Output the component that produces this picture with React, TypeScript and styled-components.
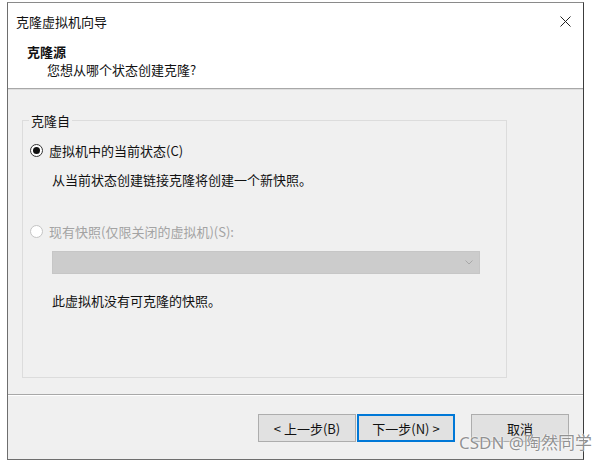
import styled, { createGlobalStyle } from "styled-components";

const GlobalStyle = createGlobalStyle`
  body {
    margin: 0;
    background: #ffffff;
    font-family: "Noto Sans CJK SC", "Noto Sans", sans-serif;
    font-size: 13px;
    color: #111111;
  }
`;

const Page = styled.div`
  position: relative;
  width: 611px;
  height: 464px;
  padding: 2px 0 0 7px;
  box-sizing: border-box;
`;

const Window = styled.div`
  width: 577px;
  height: 458px;
  box-sizing: border-box;
  border: 1px solid #6e6e6e;
  border-top-color: #8a8a8a;
  border-right-color: #3c3c3c;
  display: flex;
  flex-direction: column;
  background: #f0f0f0;
`;

const Header = styled.div`
  background: #ffffff;
  height: 85px;
  border-bottom: 1px solid #a8a8a8;
  box-shadow: 0 1px 0 #dedede;
`;

const TitleBar = styled.div`
  height: 36px;
  display: flex;
  align-items: center;
  justify-content: space-between;
  padding: 0 12px 0 8px;
  line-height: 17px;
`;

const Close = styled.svg`
  width: 11px;
  height: 11px;
`;

const Heading = styled.div`
  margin: 4px 0 0 19px;
  font-weight: 700;
  line-height: 17px;
`;

const SubHeading = styled.div`
  margin: 1px 0 0 39px;
  line-height: 17px;
`;

const Body = styled.div`
  height: 305px;
  margin-top: 1px;
  padding: 22px 0 0 14px;
  box-sizing: border-box;
  border-bottom: 1px solid #a8a8a8;
`;

const Group = styled.fieldset`
  width: 485px;
  height: 266px;
  box-sizing: border-box;
  margin: 0;
  padding: 0 0 0 7px;
  border: 1px solid #dcdcdc;
  display: flex;
  flex-direction: column;
`;

const Legend = styled.legend`
  padding: 0 2px;
  margin-left: -1px;
  line-height: 17px;
`;

const RadioRow = styled.div<{ $disabled?: boolean; $top: number }>`
  display: flex;
  align-items: center;
  gap: 6px;
  margin-top: ${(p) => p.$top}px;
  line-height: 17px;
  color: ${(p) => (p.$disabled ? "#a3a3a3" : "#111111")};
`;

const Radio = styled.span<{ $checked?: boolean; $disabled?: boolean }>`
  width: 13px;
  height: 13px;
  box-sizing: border-box;
  border-radius: 50%;
  border: 1px solid ${(p) => (p.$disabled ? "#c4c4c4" : "#333333")};
  background: #ffffff;
  display: flex;
  align-items: center;
  justify-content: center;

  &::after {
    content: "";
    width: 7px;
    height: 7px;
    border-radius: 50%;
    background: ${(p) => (p.$checked ? "#111111" : "transparent")};
  }
`;

const Note = styled.div<{ $top: number }>`
  margin: ${(p) => p.$top}px 0 0 22px;
  line-height: 17px;
`;

const Select = styled.div`
  margin: 11px 0 0 22px;
  width: 428px;
  height: 23px;
  box-sizing: border-box;
  background: #cccccc;
  border: 1px solid #c6c6c6;
  display: flex;
  align-items: center;
  justify-content: flex-end;
  padding-right: 6px;
`;

const Chevron = styled.svg`
  width: 8px;
  height: 5px;
`;

const Footer = styled.div`
  flex: 1;
  border-top: 1px solid #ffffff;
  display: flex;
  justify-content: flex-end;
  align-items: flex-start;
  padding: 18px 14px 0 0;
`;

const Button = styled.button<{ $primary?: boolean; $gap?: number }>`
  width: 98px;
  height: 28px;
  margin-left: ${(p) => p.$gap ?? 0}px;
  box-sizing: border-box;
  background: #e1e1e1;
  border: ${(p) => (p.$primary ? "2px solid #0078d7" : "1px solid #adadad")};
  font-family: inherit;
  font-size: 13px;
  color: #111111;
  line-height: 17px;
  padding: 0;
`;

const Watermark = styled.div`
  position: absolute;
  left: 459px;
  top: 432px;
  font-size: 17px;
  line-height: 22px;
  color: rgba(110, 110, 110, 0.75);
  text-shadow: 0 0 2px #ffffff, 0 0 1px #ffffff;
  font-family: "Noto Sans", "Noto Sans CJK SC", sans-serif;
`;

export default function App() {
  return (
    <Page>
      <GlobalStyle />
      <Window>
        <Header>
          <TitleBar>
            <span>克隆虚拟机向导</span>
            <Close viewBox="0 0 11 11">
              <path d="M0.5 0.5 L10.5 10.5 M10.5 0.5 L0.5 10.5" stroke="#222" strokeWidth="1" />
            </Close>
          </TitleBar>
          <Heading>克隆源</Heading>
          <SubHeading>您想从哪个状态创建克隆?</SubHeading>
        </Header>
        <Body>
          <Group>
            <Legend>克隆自</Legend>
            <RadioRow $top={13}>
              <Radio $checked />
              <span>虚拟机中的当前状态(C)</span>
            </RadioRow>
            <Note $top={12}>从当前状态创建链接克隆将创建一个新快照。</Note>
            <RadioRow $disabled $top={35}>
              <Radio $disabled />
              <span>现有快照(仅限关闭的虚拟机)(S):</span>
            </RadioRow>
            <Select>
              <Chevron viewBox="0 0 8 5">
                <path d="M0.5 0.5 L4 4 L7.5 0.5" fill="none" stroke="#a8a8a8" strokeWidth="1" />
              </Chevron>
            </Select>
            <Note $top={18}>此虚拟机没有可克隆的快照。</Note>
          </Group>
        </Body>
        <Footer>
          <Button>&lt; 上一步(B)</Button>
          <Button $primary $gap={1}>下一步(N) &gt;</Button>
          <Button $gap={16}>取消</Button>
        </Footer>
      </Window>
      <Watermark>CSDN @陶然同学</Watermark>
    </Page>
  );
}
